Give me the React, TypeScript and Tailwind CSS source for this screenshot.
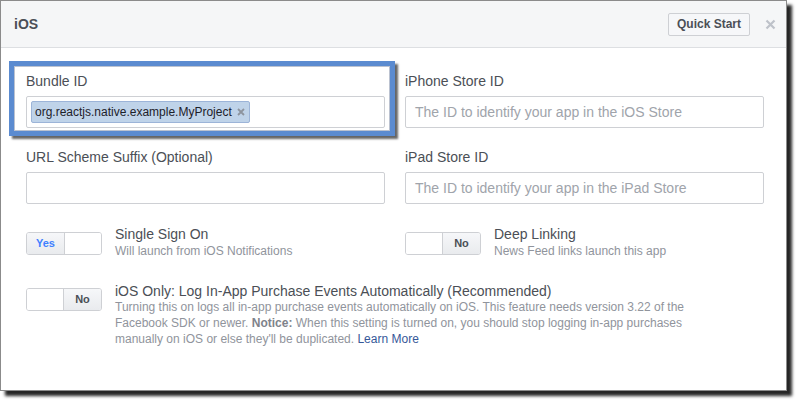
import React from 'react';

const font = { fontFamily: '"Liberation Sans", Arial, Helvetica, sans-serif' };

const Toggle: React.FC<{ on: boolean }> = ({ on }) => (
  <div className="flex w-[76px] h-[23px] shrink-0 rounded-[3px] border border-[#ced0d4] overflow-hidden">
    {on ? (
      <>
        <div className="w-[37px] flex items-center justify-center bg-gradient-to-b from-[#f6f7f9] to-[#e9ebee] text-[11px] font-bold text-[#4080ff]">Yes</div>
        <div className="flex-1 bg-white border-l border-[#ced0d4]" />
      </>
    ) : (
      <>
        <div className="flex-1 bg-white border-r border-[#ced0d4]" />
        <div className="w-[37px] flex items-center justify-center bg-gradient-to-b from-[#f6f7f9] to-[#e9ebee] text-[11px] font-bold text-[#4b4f56]">No</div>
      </>
    )}
  </div>
);

const Field: React.FC<{ label: string; placeholder?: string; children?: React.ReactNode; top?: string }> = ({ label, placeholder, children, top = '' }) => (
  <div className={top}>
    <div className="text-[14px] leading-[18px] text-[#4b4f56] mb-[6px]">{label}</div>
    <div className="h-[32px] border border-[#ced0d4] rounded-[2px] bg-white flex items-center px-[4px]">
      {children ?? <span className="pl-[5px] text-[14px] text-[#a0a4ab]">{placeholder}</span>}
    </div>
  </div>
);

export default function App() {
  return (
    <div className="w-[798px] h-[403px] bg-white" style={font}>
      <div className="w-[787px] h-[391px] border border-[#8b8b8b] bg-white shadow-[5px_5px_3px_rgba(0,0,0,0.85)] flex flex-col">
        {/* Header */}
        <div className="h-[47px] shrink-0 bg-[#f5f6f7] border-b border-[#dddfe2] flex items-center pl-[13px] pr-[10px]">
          <span className="text-[14px] font-bold text-[#4b4f56]">iOS</span>
          <div className="flex-1" />
          <button className="h-[23px] w-[82px] border border-[#ced0d4] rounded-[2px] bg-[#f6f7f9] text-[12px] font-bold text-[#4b4f56]">Quick Start</button>
          <svg className="ml-[15px]" width="11" height="11" viewBox="0 0 11 11">
            <path d="M1.5 1.5 L9.5 9.5 M9.5 1.5 L1.5 9.5" stroke="#bec2c9" strokeWidth="2.2" />
          </svg>
        </div>

        {/* Body */}
        <div className="relative flex-1 pl-[25px] pr-[22px]">
          <div className="grid grid-cols-2 gap-x-[20px] pt-[24px]">
            <Field label="Bundle ID">
              <div className="h-[22px] flex items-center gap-[5px] rounded-[2px] border border-[#9cb4d8] bg-[#bfd3e9] pl-[3px] pr-[4px] text-[12px] text-[#1d2129]">
                org.reactjs.native.example.MyProject
                <svg width="8" height="8" viewBox="0 0 8 8">
                  <path d="M1 1 L7 7 M7 1 L1 7" stroke="#8d949e" strokeWidth="1.8" />
                </svg>
              </div>
            </Field>
            <Field label="iPhone Store ID" placeholder="The ID to identify your app in the iOS Store" />
            <Field label="URL Scheme Suffix (Optional)" top="mt-[20px]" />
            <Field label="iPad Store ID" placeholder="The ID to identify your app in the iPad Store" top="mt-[20px]" />
          </div>

          <div className="grid grid-cols-2 gap-x-[20px] mt-[22px]">
            <div className="flex gap-[13px]">
              <div className="mt-[6px]"><Toggle on /></div>
              <div>
                <div className="text-[14px] leading-[17px] text-[#4b4f56]">Single Sign On</div>
                <div className="text-[12px] leading-[17px] text-[#90949c]">Will launch from iOS Notifications</div>
              </div>
            </div>
            <div className="flex gap-[13px]">
              <div className="mt-[6px]"><Toggle on={false} /></div>
              <div>
                <div className="text-[14px] leading-[17px] text-[#4b4f56]">Deep Linking</div>
                <div className="text-[12px] leading-[17px] text-[#90949c]">News Feed links launch this app</div>
              </div>
            </div>
          </div>

          <div className="flex gap-[13px] mt-[23px]">
            <div className="mt-[5px]"><Toggle on={false} /></div>
            <div>
              <div className="text-[14px] leading-[16px] text-[#4b4f56]">iOS Only: Log In-App Purchase Events Automatically (Recommended)</div>
              <div className="text-[12px] leading-[16px] text-[#90949c] whitespace-nowrap">
                Turning this on logs all in-app purchase events automatically on iOS. This feature needs version 3.22 of the
                <br />
                Facebook SDK or newer. <span className="font-bold text-[#7f838b]">Notice:</span> When this setting is turned on, you should stop logging in-app purchases
                <br />
                manually on iOS or else they'll be duplicated. <a className="text-[#365899]">Learn More</a>
              </div>
            </div>
          </div>

          {/* highlight annotation around Bundle ID */}
          <div className="absolute left-[8px] top-[13px] w-[386px] h-[75px] border-[5px] border-[#5b8bd0] shadow-[3px_3px_2px_rgba(0,0,0,0.6),inset_0_0_0_1px_rgba(60,80,120,0.35)] pointer-events-none" />
        </div>
      </div>
    </div>
  );
}
